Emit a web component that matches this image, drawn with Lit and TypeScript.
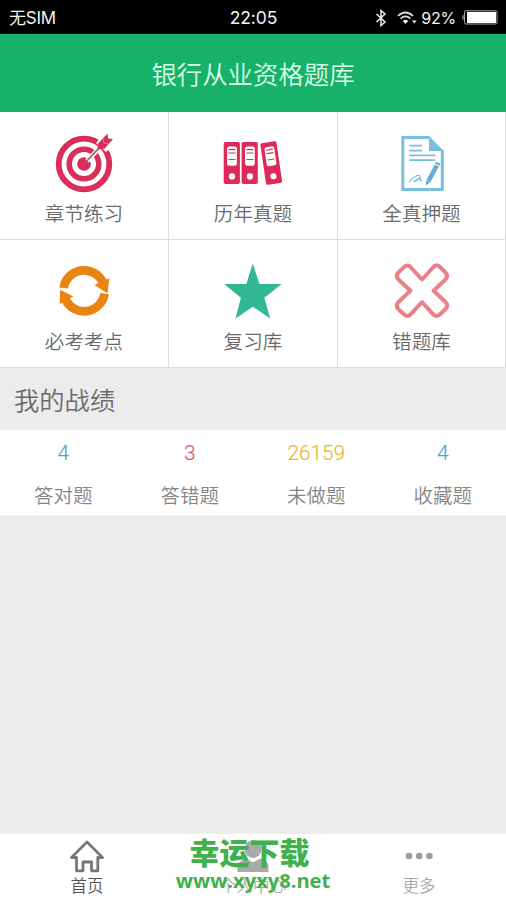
import { LitElement, html, css, svg } from "lit";
import { customElement } from "lit/decorators.js";

const target = svg`
  <g fill="none" stroke="#d92e5c">
    <circle cx="30" cy="33" r="25.3" stroke-width="5.8"/>
    <circle cx="30" cy="33" r="14.8" stroke-width="5.6"/>
  </g>
  <circle cx="30" cy="33" r="6.8" fill="#d92e5c"/>
  <path d="M33 30 56 6" stroke="#fff" stroke-width="4.500"/>
  <path d="M42 12 49 4 60 14 52 21Z" fill="#fff"/>
  <path d="M29 34 46 16" stroke="#b8506c" stroke-width="1.800"/>
  <path d="M43.500 18.500 44 12.500 53.500 2.500 54 7.500 59 8 50.500 17.800Z" fill="#d92e5c"/>
  <path d="M49 7.500 50 12 54.500 12.500" stroke="#fff" stroke-width=".6" fill="none" opacity=".6"/>`;

const binder = svg`
  <rect width="16.2" height="42" rx="1.8" fill="#de2a58"/>
  <rect x="3.4" y="4.6" width="9.8" height="19.2" rx="2.2" fill="#fff"/>
  <path d="M4.8 7.6h7M4.8 11h7M4.8 17.5h7" stroke="#c9385d" stroke-width="1.2"/>
  <circle cx="8.3" cy="34.4" r="3.1" fill="#fff"/>`;

const binders = svg`
  <g transform="translate(.7 11)">${binder}</g>
  <g transform="translate(18.6 11)">${binder}</g>
  <g transform="translate(37.2 12.4) rotate(-8.3)">${binder}</g>`;

const sheet = svg`
  <path d="M37.3 6.4H10.8V58.4H50.3V19" fill="none" stroke="#78bfdb" stroke-width="3"/>
  <path d="M37 5 51.8 20H37Z" fill="#78bfdb"/>
  <path d="M17.3 14.7H30M17.3 19.7H30M17.3 24.4H43.4M17.3 29.1H43.4" stroke="#78bfdb" stroke-width="1.7"/>
  <path d="M44.8 34.5 36.5 50" stroke="#62aed0" stroke-width="4.6"/>
  <path d="M46.3 31.8 45.3 33.6" stroke="#62aed0" stroke-width="5"/>
  <path d="M34.4 49 38.6 51.2 33.6 54.4Z" fill="#62aed0"/>
  <path d="M17 51.2C21 46 27 42.500 28 45.500 28.500 47.500 23 49 22 50.500 25 51 27 46.500 28.500 47.500 29 48.500 26.500 50.500 30 49.500" fill="none" stroke="#78bfdb" stroke-width="1.200"/>`;

const cycle = svg`
  <g fill="none" stroke="#e98412" stroke-width="8.800">
    <path d="M9.700 29A20.600 20.600 0 0 1 49.500 25"/>
    <path d="M50.500 34.700A20.600 20.600 0 0 1 11.500 40.500"/>
  </g>
  <path d="M55.300 19.300 53.600 34.300 40.500 26.300 45.500 23.500 50 21.500Z" fill="#e98412"/>
  <path d="M6.200 30.800 19.500 37.600 15 39.800 11 42 5.600 45Z" fill="#e98412"/>`;

const star = svg`<path d="M29.700 4.600 36.500 25H58.700L41.300 38.700 47.200 59.500 29.700 47.700 12.500 59.500 17.900 38.700 1.200 25H23.300Z" fill="#33b795"/>`;

const cross = svg`<path d="M30 20.500 40.500 9Q44 4.700 47.600 7.600L53.600 13.600Q56.900 17.300 53 21L41.500 31.700 53 42.500Q56.900 46.300 53.600 50L47.600 55.800Q44 58.700 40.500 54.600L30 43 19.300 54.600Q16 58.700 12.400 55.800L6.200 50Q3 46.300 7 42.500L18.500 31.700 7 21Q3 17.300 6.200 13.600L12.400 7.600Q16 4.700 19.300 9Z" fill="none" stroke="#ea8088" stroke-width="4" stroke-linejoin="round"/>`;

const tiles = [
  { icon: target, label: "章节练习" },
  { icon: binders, label: "历年真题" },
  { icon: sheet, label: "全真押题" },
  { icon: cycle, label: "必考考点" },
  { icon: star, label: "复习库" },
  { icon: cross, label: "错题库" },
];

const stats = [
  { value: "4", label: "答对题", tone: "blue" },
  { value: "3", label: "答错题", tone: "red" },
  { value: "26159", label: "未做题", tone: "gold" },
  { value: "4", label: "收藏题", tone: "blue" },
];

@customElement("app-root")
export class AppRoot extends LitElement {
  static styles = css`
    :host {
      display: flex;
      flex-direction: column;
      position: relative;
      height: 900px;
      overflow: hidden;
      background: #ececec;
      font-family: "Noto Sans CJK SC", sans-serif;
      font-weight: 350;
      color: #6a6a6a;
    }
    svg { display: block; }
    .status {
      display: grid;
      grid-template-columns: 1fr auto 1fr;
      align-items: center;
      height: 34px;
      box-sizing: border-box;
      padding: 1px 8px 0 9px;
      background: #000;
      color: #f4f4f4;
      font: 400 17px/32px Inter, "Noto Sans CJK SC", sans-serif;
      letter-spacing: -0.2px;
    }
    .clock { font-size: 17.5px; letter-spacing: -0.1px; }
    .right { display: flex; justify-content: flex-end; align-items: center; font-size: 16px; }
    .wifi { margin: 0 4px 0 10px; }
    .battery { margin-left: 5px; }
    .title {
      height: 78px;
      background: #17b169;
      color: #d9ffe8;
      text-align: center;
      font-size: 25.4px;
      line-height: 78px;
    }
    .grid {
      display: grid;
      grid-template-columns: 169px 169px 168px;
      grid-auto-rows: 128px;
      background: #fff;
    }
    .tile {
      display: flex;
      flex-direction: column;
      align-items: center;
      box-sizing: border-box;
      padding-top: 19px;
      border-right: 1px solid #dcdcdc;
      border-bottom: 1px solid #dcdcdc;
    }
    .tile span { font-size: 19.6px; line-height: 30px; margin-top: 3px; }
    .heading { height: 62px; padding-left: 14px; font-size: 25.3px; line-height: 63px; }
    .stats {
      display: grid;
      grid-template-columns: repeat(4, 1fr);
      height: 85px;
      background: #fff;
      text-align: center;
    }
    .num { font: 300 20.8px/46px Roboto, sans-serif; -webkit-text-stroke: 0.2px currentColor; }
    .cap { font-size: 19.5px; line-height: 37px; color: #858585; }
    .blue { color: #4ba3d3; }
    .red { color: #e05a68; }
    .gold { color: #e8b92c; }
    .tabs {
      display: flex;
      box-sizing: border-box;
      height: 66px;
      margin-top: auto;
      padding: 5px 4px 0;
      background: #fff;
    }
    .tab {
      flex: 1;
      display: flex;
      flex-direction: column;
      align-items: center;
      font-size: 16.5px;
      line-height: 24px;
      color: #aaa;
    }
    .tab.on { color: #555; }
    .mark {
      position: absolute;
      left: 0;
      width: 506px;
      bottom: 7px;
      text-align: center;
      color: #3fb24c;
    }
    .name { font-size: 30px; line-height: 36px; padding-right: 7px; font-weight: 900; }
    .url { font: 700 20.1px/24px "Open Sans", sans-serif; }
  `;

  render() {
    return html`
      <div class="status">
        <span>无SIM</span>
        <span class="clock">22:05</span>
        <div class="right">
          <svg width="12" height="18" viewBox="0 0 12 18"><path d="M1.500 5 10 13 6 16.500V1.500L10 5 1.500 13" fill="none" stroke="#eee" stroke-width="1.500"/></svg>
          <svg class="wifi" width="20" height="15" viewBox="0 0 20 15">
            <path d="M1 6Q8.500-1 16 6M3.600 8.600Q8.500 4.200 13.400 8.600" fill="none" stroke="#ddd" stroke-width="1.700"/>
            <path d="M5.800 11Q8.500 8.700 11.200 11L8.500 14Z" fill="#eee"/>
            <path d="M15 10.500h4.600L17.300 13.500Z" fill="#eee"/>
          </svg>
          <span>92%</span>
          <svg class="battery" width="37" height="15" viewBox="0 0 37 15">
            <rect x="3.500" y=".8" width="32.500" height="13.200" rx="1.500" fill="none" stroke="#aaa"/>
            <rect x="6" y="2" width="29" height="11" fill="#fff"/>
            <path d="M2.500 4.500Q0 7.500 2.500 10.500Z" fill="#bbb"/>
          </svg>
        </div>
      </div>
      <div class="title">银行从业资格题库</div>
      <div class="grid">
        ${tiles.map((t) => html`<div class="tile"><svg width="60" height="64" viewBox="0 0 60 64">${t.icon}</svg><span>${t.label}</span></div>`)}
      </div>
      <div class="heading">我的战绩</div>
      <div class="stats">
        ${stats.map((s) => html`<div><div class="num ${s.tone}">${s.value}</div><div class="cap">${s.label}</div></div>`)}
      </div>
      <div class="tabs">
        <div class="tab on">
          <svg width="36" height="34" viewBox="0 0 36 34"><path d="M2.500 18.500 18 3 33.500 18.500H28.800V31.800H22.500V23H14V31.800H7.500V18.500Z" fill="none" stroke="#73787c" stroke-width="2.800" stroke-linejoin="round"/></svg>
          <span>首页</span>
        </div>
        <div class="tab">
          <svg width="36" height="34" viewBox="0 0 36 34"><ellipse cx="18" cy="10" rx="8.500" ry="9" fill="#aaa"/><path d="M2.500 33V26Q3 22.500 11 19.500L18 23.500 25 19.500Q33 22.500 33.500 26V33Z" fill="#aaa"/></svg>
          <span>个人中心</span>
        </div>
        <div class="tab">
          <svg width="36" height="34" viewBox="0 0 36 34" fill="#9b9b9b"><circle cx="8" cy="17" r="3.300"/><circle cx="18.200" cy="17" r="3.300"/><circle cx="28.400" cy="17" r="3.300"/></svg>
          <span>更多</span>
        </div>
      </div>
      <div class="mark"><div class="name">幸运下载</div><div class="url">www.xyxy8.net</div></div>
    `;
  }
}
